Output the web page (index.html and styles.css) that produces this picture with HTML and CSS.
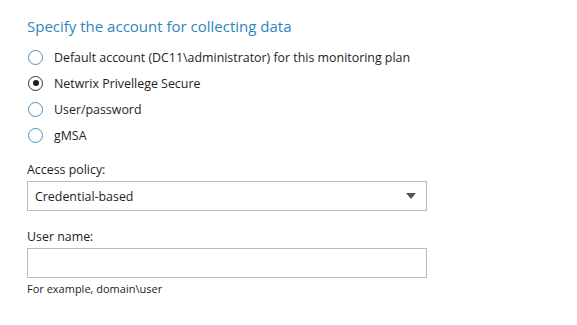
FILE: index.html
```html
<!DOCTYPE html>
<html lang="en">
  <head>
    <meta charset="UTF-8" />
    <title>Account for collecting data</title>
    <link rel="stylesheet" href="styles.css">
  </head>
  <body>
    <div class="panel">
      <h2 class="title">Specify the account for collecting data</h2>
      <div class="options">
        <label class="option"><span class="radio"></span>Default account (DC11\administrator) for this monitoring plan</label>
        <label class="option"><span class="radio checked"></span>Netwrix Privellege Secure</label>
        <label class="option"><span class="radio"></span>User/password</label>
        <label class="option"><span class="radio"></span>gMSA</label>
      </div>
      <div class="field">
        <div class="label">Access policy:</div>
        <div class="select">
          <span>Credential-based</span>
          <span class="arrow"></span>
        </div>
      </div>
      <div class="field">
        <div class="label">User name:</div>
        <div class="input"></div>
        <div class="hint">For example, domain\user</div>
      </div>
    </div>
  </body>
</html>
```

FILE: styles.css
```css
* {
  box-sizing: border-box;
  margin: 0;
  padding: 0;
}
body {
  font-family: "Open Sans", Arial, sans-serif;
  background: #fff;
  color: #1e1e1e;
}
.panel {
  padding: 15px 0 0 27px;
  width: 427px;
}
.title {
  font-weight: 400;
  font-size: 15px;
  color: #2e86bd;
  line-height: 22px;
}
.options {
  display: flex;
  flex-direction: column;
  margin-top: 7px;
}
.option {
  display: flex;
  align-items: center;
  gap: 11px;
  font-size: 12.4px;
  height: 26px;
}
.radio {
  width: 15px;
  height: 15px;
  border: 1.5px solid #4a90c0;
  border-radius: 50%;
  display: flex;
  align-items: center;
  justify-content: center;
  margin-left: 1px;
}
.radio.checked {
  border-color: #333;
}
.radio.checked::after {
  content: "";
  width: 6px;
  height: 6px;
  border-radius: 50%;
  background: #1e1e1e;
}
.field {
  margin-top: 14px;
}
.field + .field {
  margin-top: 18px;
}
.label {
  font-size: 12.4px;
  line-height: 16px;
  margin-bottom: 3px;
}
.select,
.input {
  height: 30px;
  border: 1px solid #a9bfcc;
  display: flex;
  align-items: center;
  justify-content: space-between;
  padding: 0 10px 0 7px;
  font-size: 12.4px;
}
.arrow {
  width: 0;
  height: 0;
  border-left: 5px solid transparent;
  border-right: 5px solid transparent;
  border-top: 6px solid #555;
}
.hint {
  font-size: 11px;
  line-height: 15px;
  margin-top: 3px;
}
```
